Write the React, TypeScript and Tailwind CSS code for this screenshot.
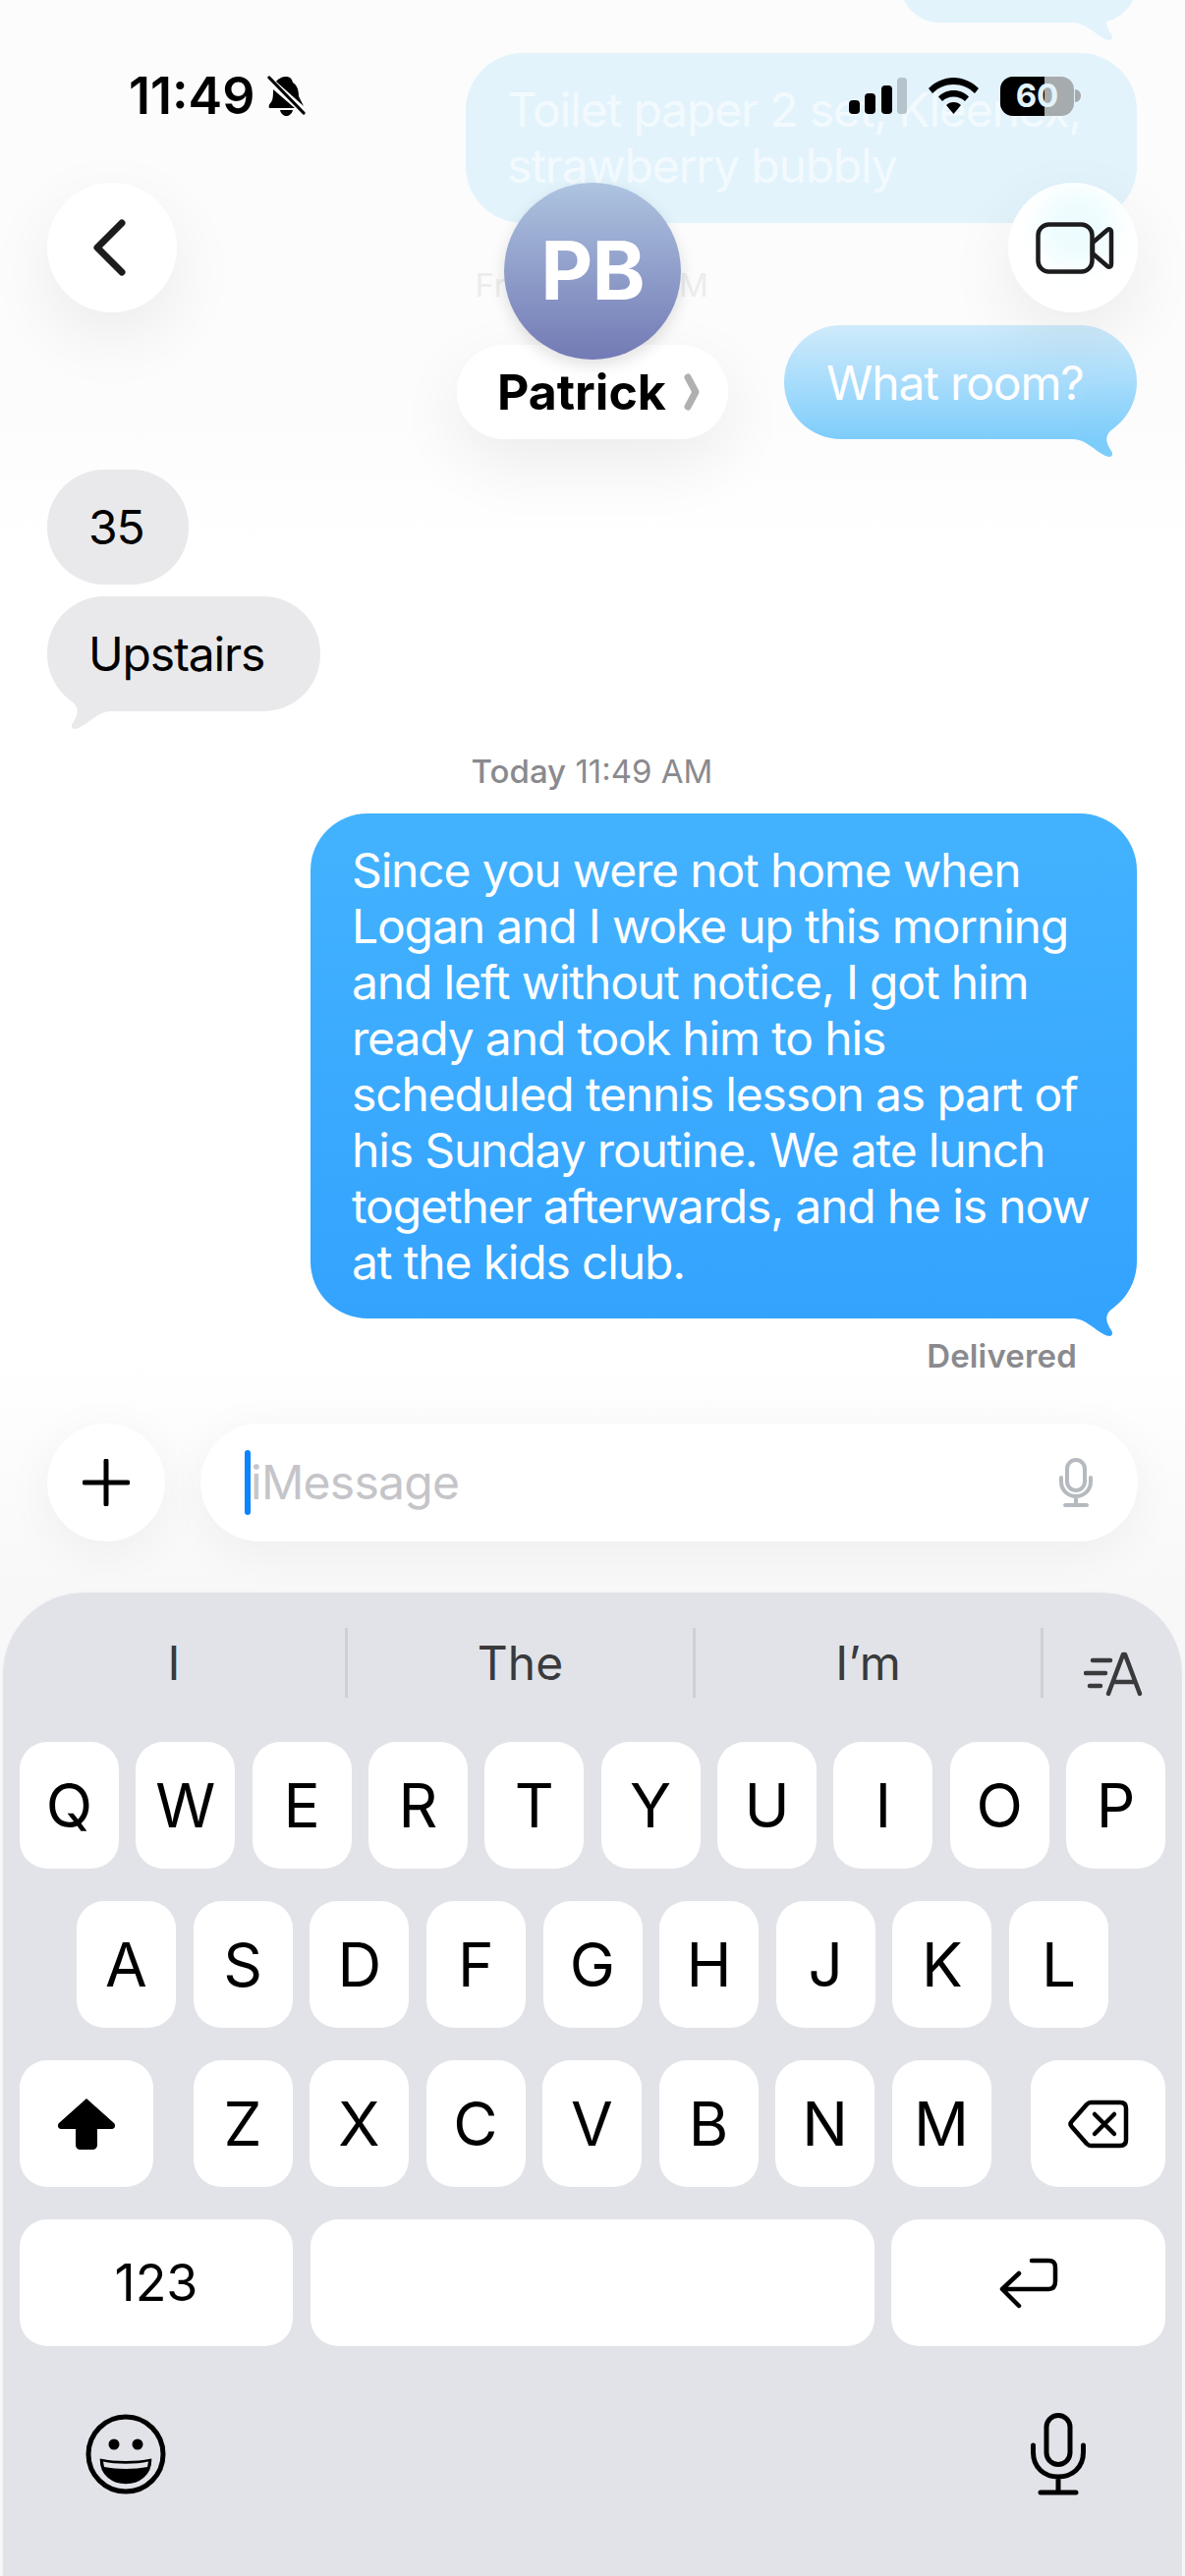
import React from "react";

const row1 = ["Q", "W", "E", "R", "T", "Y", "U", "I", "O", "P"];
const row2 = ["A", "S", "D", "F", "G", "H", "J", "K", "L"];
const row3 = ["Z", "X", "C", "V", "B", "N", "M"];

const Tail = ({ side, top, bottom }: { side: "left" | "right"; top: string; bottom: string }) => {
  const id = `tail-${top.slice(1)}-${bottom.slice(1)}`;
  return (
    <svg
      width="70"
      height="75"
      viewBox="0 0 70 75"
      className={`absolute bottom-[-20px] ${side === "right" ? "right-0" : "left-0 -scale-x-100"}`}
    >
      <defs>
        <linearGradient id={id} gradientUnits="userSpaceOnUse" x1="0" y1="0" x2="0" y2="55">
          <stop offset="0" stopColor={top} />
          <stop offset="1" stopColor={bottom} />
        </linearGradient>
      </defs>
      <path
        d="M0 55 L5 55 C20 55 30 71 42 73 C45 73 46 70 44 67 C38 58 37 51 45 45 C60 33 67 22 67 0 L20 0 Z"
        fill={`url(#${id})`}
      />
    </svg>
  );
};

type BubbleProps = {
  side: "left" | "right";
  className: string;
  tail?: [string, string];
  children?: React.ReactNode;
};

const Bubble = ({ side, className, tail, children }: BubbleProps) => (
  <div
    className={`relative rounded-[58px] text-[48px] leading-[57px] tracking-[-0.024em] ${
      side === "right" ? "self-end" : "self-start"
    } ${className}`}
  >
    {tail && <Tail side={side} top={tail[0]} bottom={tail[1]} />}
    <div className="relative">{children}</div>
  </div>
);

const Key = ({
  label,
  className = "w-[101px] text-[62px]",
  children,
}: {
  label?: string;
  className?: string;
  children?: React.ReactNode;
}) => (
  <div className={`flex h-[129px] items-center justify-center rounded-[28px] bg-white leading-none text-black ${className}`}>
    {label}
    {children}
  </div>
);

const StatusBar = () => (
  <div className="absolute inset-x-0 top-[77px] flex h-[41px] items-center justify-between pl-[131px] pr-[106px]">
    <div className="flex items-center gap-[13px]">
      <span className="text-[52px] font-semibold leading-none text-black">11:49</span>
      <svg width="39" height="41" viewBox="0 0 39 41">
        <path d="M19 1 C23 1 25 3 26 7 C31 10 32 16 32 21 L37 31 L9 6 C11 3 15 1 19 1 Z M6 14 L28 33 L2 33 C1 31 2 29 4 27 C6 24 6 19 6 14 Z M13 35 L26 35 C25 39 22 41 19.5 41 C17 41 14 39 13 35 Z" fill="#000" />
        <path d="M2 2 L37 38" stroke="#000" strokeWidth="3.2" strokeLinecap="round" />
      </svg>
    </div>
    <div className="flex items-center gap-[22px]">
      <svg width="59" height="37" viewBox="0 0 59 37">
        <rect x="0" y="23" width="11" height="14" rx="4" fill="#000" />
        <rect x="16" y="16" width="11" height="21" rx="4" fill="#000" />
        <rect x="33" y="8" width="11" height="29" rx="4" fill="#000" />
        <rect x="49" y="0" width="10" height="37" rx="3.5" fill="#b5c3cb" />
      </svg>
      <svg width="51" height="37" viewBox="0 0 51 37">
        <path d="M25.5 0 C35 0 44 4 51 11 L47 16 C41 10 33.5 7 25.5 7 C17.5 7 10 10 4 16 L0 11 C7 4 16 0 25.5 0 Z" fill="#000" />
        <path d="M25.5 13 C32 13 37 15.5 41 19.5 L37 24 C34 21 30 19.5 25.5 19.5 C21 19.5 17 21 14 24 L10 19.5 C14 15.5 19 13 25.5 13 Z" fill="#000" />
        <path d="M25.5 25 C29 25 31 26 33 28 L25.5 37 L18 28 C20 26 22 25 25.5 25 Z" fill="#000" />
      </svg>
      <div className="flex items-center gap-[1px]">
        <div className="relative flex h-[40px] w-[75px] items-center justify-center overflow-hidden rounded-[13px] bg-[#a6abae]">
          <div className="absolute inset-y-0 left-0 w-[45px] bg-black" />
          <span className="relative text-[33px] font-bold leading-none text-[#e2f3fc]">60</span>
        </div>
        <div className="h-[13px] w-[6px] rounded-r-full bg-[#a6abae]" />
      </div>
    </div>
  </div>
);

const NavBar = () => (
  <div className="absolute inset-x-0 top-[186px] flex items-start justify-between px-[48px]">
    <div className="flex size-[132px] items-center justify-center rounded-full bg-white shadow-[0_24px_70px_rgba(0,0,0,0.07)]">
      <svg width="40" height="60" viewBox="0 0 40 60" fill="none" className="-ml-[6px]">
        <path d="M33 5 L8 30 L33 55" stroke="#1c1c1e" strokeWidth="7" strokeLinecap="round" strokeLinejoin="round" />
      </svg>
    </div>
    <div className="flex flex-col items-center">
      <div className="relative z-10 flex size-[180px] items-center justify-center rounded-full bg-gradient-to-b from-[#aec4e0] to-[#737ab4] text-[82px] font-bold leading-none tracking-[-0.01em] text-white shadow-[0_6px_16px_rgba(0,0,0,0.12)]">
        PB
      </div>
      <div className="-mt-[15px] flex h-[96px] w-[276px] items-center gap-[18px] rounded-full bg-white pl-[41px] shadow-[0_24px_70px_rgba(0,0,0,0.07)]">
        <span className="text-[50px] font-bold leading-none text-black">Patrick</span>
        <svg width="16" height="38" viewBox="0 0 16 38" fill="none">
          <path d="M4 4 L12 19 L4 34" stroke="#b0b0b0" strokeWidth="7" strokeLinecap="round" strokeLinejoin="round" />
        </svg>
      </div>
    </div>
    <div className="relative flex size-[132px] items-center justify-center overflow-hidden rounded-full bg-white shadow-[0_24px_70px_rgba(0,0,0,0.07)]">
      <span className="absolute left-[30px] top-[6px] size-[80px] rounded-full bg-[#e6fbff] opacity-70 blur-[12px]" />
      <svg width="80" height="53" viewBox="0 0 80 53" fill="none" className="relative ml-[4px]">
        <rect x="2.5" y="2.5" width="55" height="48" rx="11" stroke="#1c1c1e" strokeWidth="4.5" />
        <path d="M58 21 L73 8 C75 6.5 77 7.5 77 10 L77 43 C77 45.5 75 46.5 73 45 L58 32 Z" stroke="#1c1c1e" strokeWidth="4.5" strokeLinejoin="round" />
      </svg>
    </div>
  </div>
);

const Thread = () => (
  <div className="flex h-[1449px] flex-col pl-[48px] pr-[49px]">
    <Bubble side="right" tail={["#e2f3fc", "#e2f3fc"]} className="-mt-[57px] h-[80px] w-[241px] bg-[#e2f3fc]" />
    <Bubble side="right" className="mt-[31px] h-[173px] w-[683px] bg-[#e2f3fc] py-[29px] pl-[42px] text-[#f3fafe]">
      Toilet paper 2 set, Kleenex, strawberry bubbly
    </Bubble>
    <div className="mt-[43px] h-[40px] text-center text-[33px] leading-[40px] tracking-[0.02em] text-[#ececec]">
      Friday 5:12 PM
    </div>
    <Bubble
      side="right"
      tail={["#a4dbfb", "#7dcdfb"]}
      className="mt-[21px] h-[116px] w-[359px] bg-gradient-to-b from-[#cfebfb] to-[#7dcdfb] py-[30px] pl-[43px] text-white"
    >
      What room?
    </Bubble>
    <Bubble side="left" className="mt-[31px] h-[117px] w-[144px] bg-[#e9e9eb] py-[30px] pl-[42px] text-black">
      35
    </Bubble>
    <Bubble
      side="left"
      tail={["#e9e9eb", "#e9e9eb"]}
      className="mt-[12px] h-[117px] w-[278px] bg-[#e9e9eb] py-[30px] pl-[42px] text-black"
    >
      Upstairs
    </Bubble>
    <div className="mt-[41px] h-[40px] text-center text-[33px] leading-[40px] text-[#8a8a8e]">
      <span className="font-medium">Today</span> 11:49 AM
    </div>
    <Bubble
      side="right"
      tail={["#34a4fe", "#33a3fe"]}
      className="mt-[23px] h-[514px] w-[841px] bg-gradient-to-b from-[#43b2fe] to-[#33a3fe] px-[42px] py-[29px] text-white"
    >
      Since you were not home when Logan and I woke up this morning and left without notice, I got him ready and took
      him to his scheduled tennis lesson as part of his Sunday routine. We ate lunch together afterwards, and he is now
      at the kids club.
    </Bubble>
    <div className="mr-[61px] mt-[18px] h-[40px] self-end text-[33px] font-semibold leading-[40px] tracking-[0.005em] text-[#8a8a8e]">
      Delivered
    </div>
  </div>
);

const Composer = () => (
  <div className="flex items-center gap-[36px] px-[48px]">
    <div className="flex size-[120px] items-center justify-center rounded-full bg-white shadow-[0_10px_50px_rgba(0,0,0,0.05)]">
      <svg width="48" height="48" viewBox="0 0 48 48" fill="none">
        <path d="M24 2 L24 46 M2 24 L46 24" stroke="#000" strokeWidth="5" strokeLinecap="round" />
      </svg>
    </div>
    <div className="flex h-[120px] flex-1 items-center rounded-full bg-white pl-[45px] pr-[46px] shadow-[0_10px_50px_rgba(0,0,0,0.05)]">
      <div className="h-[66px] w-[6px] rounded-full bg-[#0a84ff]" />
      <span className="flex-1 text-[48px] leading-none tracking-[-0.015em] text-[#c5c5c9]">iMessage</span>
      <svg width="34" height="50" viewBox="0 0 34 50" fill="none">
        <rect x="8" y="2" width="18" height="31" rx="9" stroke="#b5bac0" strokeWidth="4" />
        <path d="M2 20 L2 24 C2 33 9 39 17 39 C25 39 32 33 32 24 L32 20 M17 39 L17 48 M6 48 L28 48" stroke="#b5bac0" strokeWidth="4" strokeLinecap="round" />
      </svg>
    </div>
  </div>
);

const Keyboard = () => (
  <div className="mx-[1px] mt-[50px] flex h-[1003px] flex-col rounded-t-[85px] border-x-2 border-t-2 border-[#f6f6f8] bg-[#e2e3e8]">
    <div className="flex h-[152px] items-start pt-[36px] text-[48px] leading-[71px] text-[#3a3a3c]">
      <div className="w-[348px] text-center">I</div>
      <div className="h-[71px] w-[3px] bg-[#cfd0d5]" />
      <div className="w-[351px] text-center">The</div>
      <div className="h-[71px] w-[3px] bg-[#cfd0d5]" />
      <div className="w-[351px] text-center">I’m</div>
      <div className="h-[71px] w-[3px] bg-[#cfd0d5]" />
      <div className="flex flex-1 justify-center pt-[24px]">
        <svg width="60" height="46" viewBox="0 0 60 46" fill="none">
          <path d="M9 9 L27 9 M2 22 L22 22 M6 35 L17 35" stroke="#3a3a3c" strokeWidth="4.5" strokeLinecap="round" />
          <path d="M25 43 L40 3 L42 3 L57 43 M30 31 L52 31" stroke="#3a3a3c" strokeWidth="4.5" strokeLinecap="round" strokeLinejoin="round" />
        </svg>
      </div>
    </div>
    <div className="flex flex-col gap-[33px]">
      <div className="flex justify-between px-[17px]">
        {row1.map((k) => (
          <Key key={k} label={k} />
        ))}
      </div>
      <div className="flex justify-between px-[75px]">
        {row2.map((k) => (
          <Key key={k} label={k} />
        ))}
      </div>
      <div className="flex justify-between px-[17px]">
        <Key className="w-[136px]">
          <svg width="60" height="53" viewBox="0 0 60 53">
            <path d="M30 1 L58 26 C60 28 59 32 56 32 L41 32 L41 48 C41 51 39 53 36 53 L24 53 C21 53 19 51 19 48 L19 32 L4 32 C1 32 0 28 2 26 Z" fill="#000" />
          </svg>
        </Key>
        <div className="flex gap-[17.5px]">
          {row3.map((k) => (
            <Key key={k} label={k} />
          ))}
        </div>
        <Key className="w-[137px]">
          <svg width="62" height="50" viewBox="0 0 62 50" fill="none">
            <path d="M23 3 L53 3 C57 3 59 5 59 9 L59 41 C59 45 57 47 53 47 L23 47 C21 47 20 46 19 45 L4 28 C2 26 2 24 4 22 L19 5 C20 4 21 3 23 3 Z" stroke="#000" strokeWidth="4.5" strokeLinejoin="round" />
            <path d="M27 15 L47 35 M47 15 L27 35" stroke="#000" strokeWidth="4.5" strokeLinecap="round" />
          </svg>
        </Key>
      </div>
      <div className="flex justify-between px-[17px]">
        <Key className="w-[278px] text-[52px]" label="123" />
        <Key className="w-[574px]" />
        <Key className="w-[279px]">
          <svg width="60" height="52" viewBox="0 0 60 52" fill="none">
            <path d="M33 3 L50 3 C55 3 57 5 57 10 L57 24 C57 29 55 32 50 32 L4 32 M20 16 L3 32 L20 49" stroke="#000" strokeWidth="4.5" strokeLinecap="round" strokeLinejoin="round" />
          </svg>
        </Key>
      </div>
    </div>
    <div className="flex items-center justify-between pl-[84px] pr-[98px] pt-[68px]">
      <svg width="82" height="82" viewBox="0 0 82 82" fill="none">
        <circle cx="41" cy="41" r="38" stroke="#000" strokeWidth="5" />
        <circle cx="29" cy="31" r="5.5" fill="#000" />
        <circle cx="53" cy="31" r="5.5" fill="#000" />
        <path d="M16 47 C30 50 52 50 66 47 C66 62 54 70 41 70 C28 70 16 62 16 47 Z" stroke="#000" strokeWidth="2.5" fill="#000" />
        <path d="M18 48.5 C30 51.5 52 51.5 64 48.5 L63 54 C50 56.5 32 56.5 19 54 Z" fill="#e2e3e8" />
      </svg>
      <svg width="56" height="84" viewBox="0 0 56 84" fill="none">
        <rect x="16" y="2.5" width="24" height="50" rx="12" stroke="#000" strokeWidth="5" />
        <path d="M2.5 33 L2.5 40 C2.5 56 14 65 28 65 C42 65 53.5 56 53.5 40 L53.5 33 M28 65 L28 81 M10 81 L46 81" stroke="#000" strokeWidth="5" strokeLinecap="round" />
      </svg>
    </div>
  </div>
);

const App = () => {
  return (
    <div className="relative flex h-[2622px] w-[1206px] flex-col overflow-hidden bg-[linear-gradient(to_bottom,#fcfcfc_0px,#fcfcfc_420px,#ffffff_560px,#ffffff_1380px,#f8f8f9_1619px)] font-['Inter',sans-serif]">
      <Thread />
      <Composer />
      <Keyboard />
      <NavBar />
      <StatusBar />
    </div>
  );
};

export default App;
